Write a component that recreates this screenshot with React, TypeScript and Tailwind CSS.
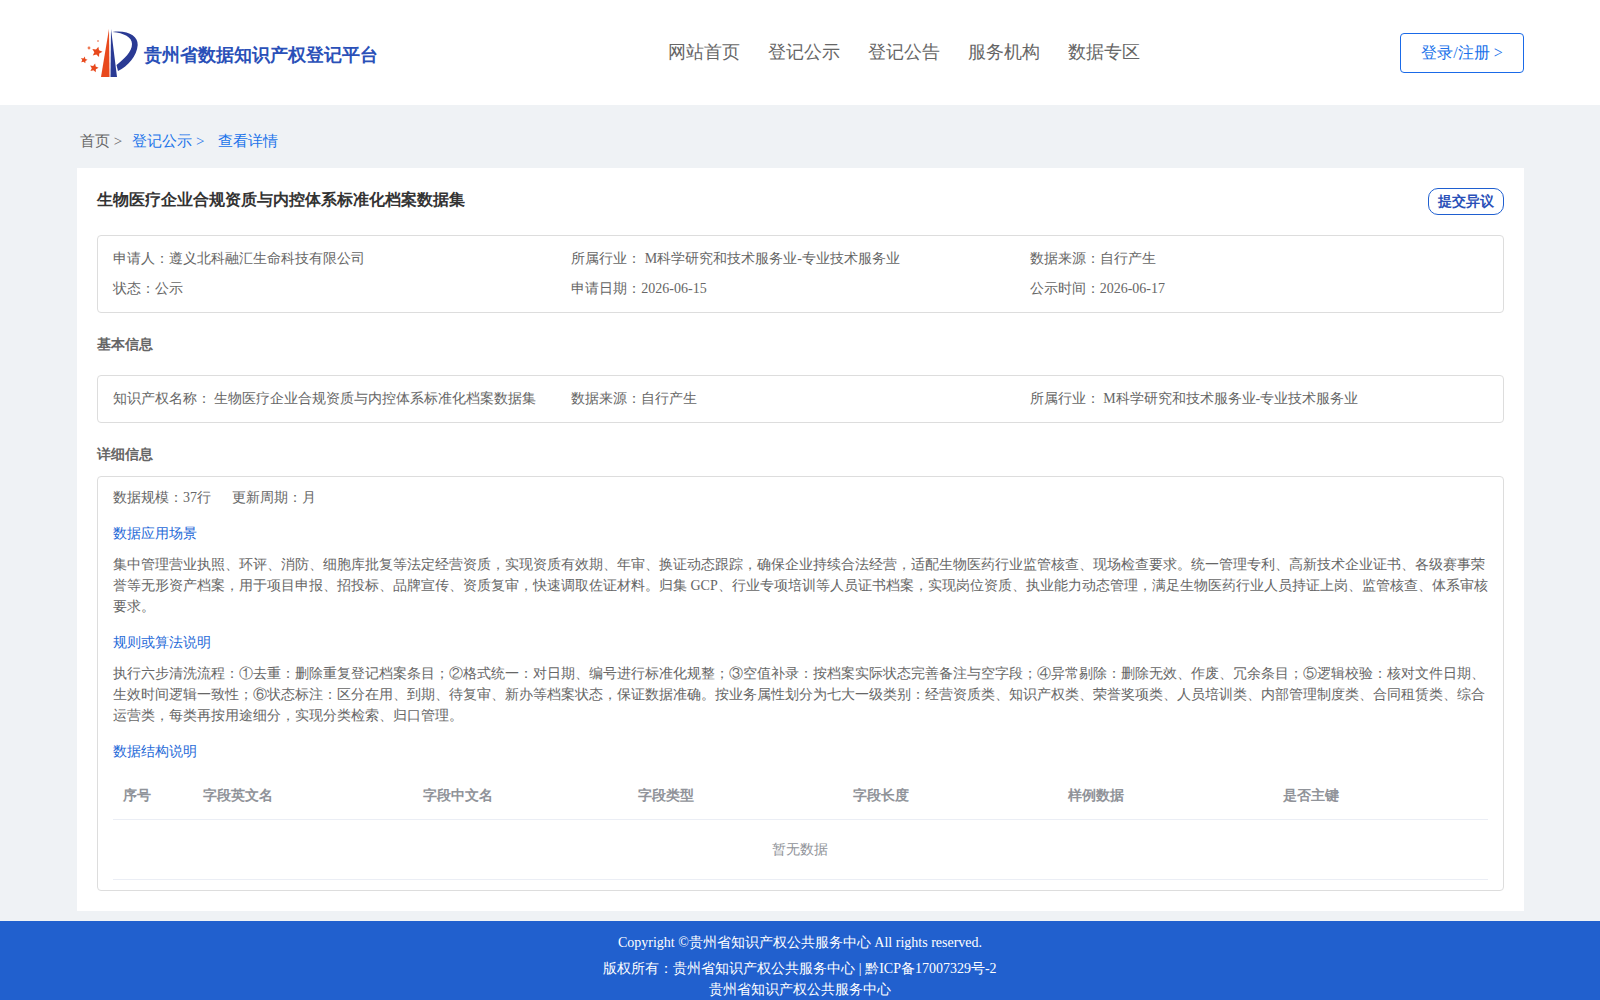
const serif = "font-['Liberation_Serif',serif]";

function star(cx: number, cy: number, r: number) {
  const pts: string[] = [];
  for (let i = 0; i < 10; i++) {
    const rad = i % 2 === 0 ? r : r * 0.48;
    const a = (Math.PI / 5) * i - Math.PI / 2 + 0.25;
    pts.push(`${(cx + rad * Math.cos(a)).toFixed(2)},${(cy + rad * Math.sin(a)).toFixed(2)}`);
  }
  return pts.join(" ");
}

function Logo() {
  return (
    <svg width="62" height="54" viewBox="0 0 62 54" className="shrink-0">
      <path d="M31 3 L31.5 51 L23 51 Z" fill="#e8491d" />
      <path d="M33 3 L39 51 L32.5 51 Z" fill="#2a3a94" />
      <path d="M34.5 6 C50 4 60 10 59.7 19 C59 30 50 40 40 45 L38.5 39 C46 33 54 26 54 18 C54 11 46 7 34.5 6 Z" fill="#2a3a94" />
      <polygon points={star(19, 26, 5.5)} fill="#e8491d" />
      <polygon points={star(6, 34, 3.6)} fill="#e8491d" />
      <polygon points={star(16, 42, 4.6)} fill="#e8491d" />
      <circle cx="11" cy="22" r="1.4" fill="#ee7a55" />
      <circle cx="20" cy="15" r="1" fill="#f09a80" />
    </svg>
  );
}

function InfoCell({ children }: { children: React.ReactNode }) {
  return <div className="min-w-0">{children}</div>;
}

const heads = ["字段中文名", "字段类型", "字段长度", "样例数据", "是否主键"];

export default function App() {
  return (
    <div className={`${serif} h-[1000px] overflow-hidden bg-[#eff2f5] text-[14px] text-[#666666]`}>
      <header className="flex h-[105px] items-center justify-between bg-white pr-[76px] pl-[78px]">
        <div className="flex w-[320px] items-center gap-[4px] pt-[1px]">
          <Logo />
          <span className="mt-[5px] font-['Liberation_Sans',sans-serif] text-[18px] font-bold whitespace-nowrap text-[#2a50b8]">
            贵州省数据知识产权登记平台
          </span>
        </div>
        <nav className="ml-[10px] flex gap-[28px] pt-[2px] pb-[2px] text-[18px] text-[#666666]">
          <span>网站首页</span>
          <span>登记公示</span>
          <span>登记公告</span>
          <span>服务机构</span>
          <span>数据专区</span>
        </nav>
        <button className="mt-[1px] h-[40px] w-[124px] rounded-[4px] border border-[#1a6ae8] text-[16px] text-[#2072ea]">
          登录/注册 &gt;
        </button>
      </header>

      <div className="pr-[76px] pl-[77px]">
        <div className="flex h-[63px] items-center pt-[10px] pl-[3px] text-[15px]">
          <span className="mr-[10px]">首页 &gt;</span>
          <span className="mr-[14px] text-[#2072ea]">登记公示 &gt;</span>
          <span className="text-[#2072ea]">查看详情</span>
        </div>

        <main className="h-[743px] bg-white px-[20px] pt-[20px]">
          <div className="flex items-start justify-between">
            <h1 className="text-[16px] leading-[24px] font-bold text-[#333333]">
              生物医疗企业合规资质与内控体系标准化档案数据集
            </h1>
            <button className="h-[27px] w-[76px] rounded-[10px] border border-[#1f5fd0] text-[14px] font-bold text-[#2a50b8]">
              提交异议
            </button>
          </div>

          <div className="mt-[20px] grid grid-cols-3 gap-y-[10px] rounded-[4px] border border-[#dddddd] px-[15px] py-[13px] leading-[20px]">
            <InfoCell>申请人：遵义北科融汇生命科技有限公司</InfoCell>
            <InfoCell>所属行业： M科学研究和技术服务业-专业技术服务业</InfoCell>
            <InfoCell>数据来源：自行产生</InfoCell>
            <InfoCell>状态：公示</InfoCell>
            <InfoCell>申请日期：2026-06-15</InfoCell>
            <InfoCell>公示时间：2026-06-17</InfoCell>
          </div>

          <h2 className="mt-[22px] text-[14px] leading-[20px] font-bold">基本信息</h2>

          <div className="mt-[20px] grid grid-cols-3 rounded-[4px] border border-[#dddddd] px-[15px] py-[13px] leading-[20px]">
            <InfoCell>
              知识产权名称：<span className="ml-[2.5px]">生物医疗企业合规资质与内控体系标准化档案数据集</span>
            </InfoCell>
            <InfoCell>数据来源：自行产生</InfoCell>
            <InfoCell>所属行业： M科学研究和技术服务业-专业技术服务业</InfoCell>
          </div>

          <h2 className="mt-[22px] text-[14px] leading-[20px] font-bold">详细信息</h2>

          <div className="mt-[11px] h-[415px] rounded-[4px] border border-[#dddddd] px-[15px] pt-[10px] leading-[21px]">
            <div className="flex gap-[21px]">
              <span>数据规模：37行</span>
              <span>更新周期：月</span>
            </div>

            <h3 className="mt-[16px] leading-[20px] font-normal text-[#1f6ad8]">数据应用场景</h3>
            <p className="mt-[10px]">
              集中管理营业执照、环评、消防、细胞库批复等法定经营资质，实现资质有效期、年审、换证动态跟踪，确保企业持续合法经营，适配生物医药行业监管核查、现场检查要求。统一管理专利、高新技术企业证书、各级赛事荣誉等无形资产档案，用于项目申报、招投标、品牌宣传、资质复审，快速调取佐证材料。归集 GCP、行业专项培训等人员证书档案，实现岗位资质、执业能力动态管理，满足生物医药行业人员持证上岗、监管核查、体系审核要求。
            </p>

            <h3 className="mt-[16px] leading-[20px] font-normal text-[#1f6ad8]">规则或算法说明</h3>
            <p className="mt-[10px]">
              执行六步清洗流程：①去重：删除重复登记档案条目；②格式统一：对日期、编号进行标准化规整；③空值补录：按档案实际状态完善备注与空字段；④异常剔除：删除无效、作废、冗余条目；⑤逻辑校验：核对文件日期、生效时间逻辑一致性；⑥状态标注：区分在用、到期、待复审、新办等档案状态，保证数据准确。按业务属性划分为七大一级类别：经营资质类、知识产权类、荣誉奖项类、人员培训类、内部管理制度类、合同租赁类、综合运营类，每类再按用途细分，实现分类检索、归口管理。
            </p>

            <h3 className="mt-[16px] leading-[20px] font-normal text-[#1f6ad8]">数据结构说明</h3>

            <table className="mt-[11px] w-full table-fixed">
              <thead>
                <tr className="h-[46px] border-b border-[#ebeef5] text-left text-[14px] font-bold text-[#909399]">
                  <th className="w-[80px] pl-[10px]">序号</th>
                  <th className="w-[220px] pl-[10px]">字段英文名</th>
                  {heads.map((h) => (
                    <th key={h} className="w-[215px] pl-[10px]">
                      {h}
                    </th>
                  ))}
                </tr>
              </thead>
              <tbody>
                <tr className="h-[60px] border-b border-[#ebeef5]">
                  <td colSpan={7} className="pr-[2px] text-center text-[#909399]">
                    暂无数据
                  </td>
                </tr>
              </tbody>
            </table>
          </div>
        </main>
      </div>

      <footer className="mt-[10px] h-[79px] bg-[#2160ce] pt-[11px] text-center text-[14px] leading-[21px] text-white">
        <div>Copyright ©贵州省知识产权公共服务中心 All rights reserved.</div>
        <div className="mt-[5px]">版权所有：贵州省知识产权公共服务中心 | 黔ICP备17007329号-2</div>
        <div>贵州省知识产权公共服务中心</div>
      </footer>
    </div>
  );
}
